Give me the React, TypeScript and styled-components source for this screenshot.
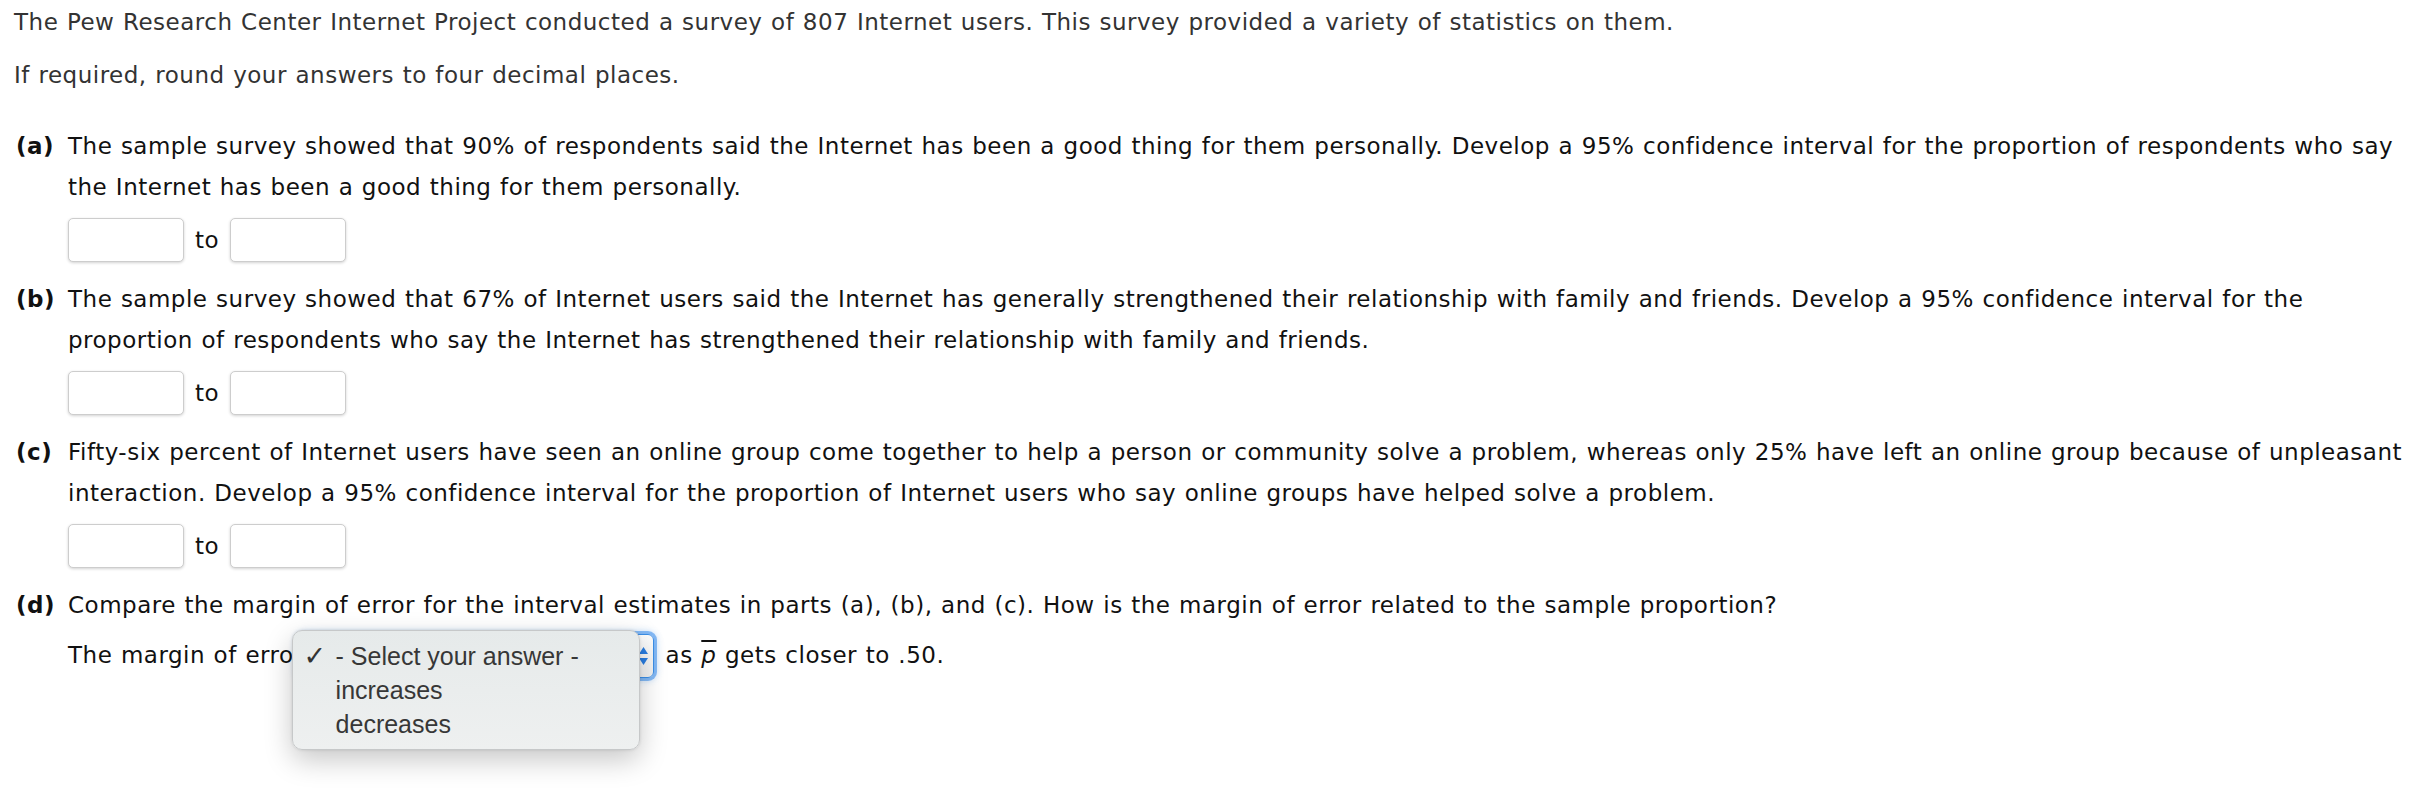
import React from 'react'
import styled, { createGlobalStyle } from 'styled-components'

const GlobalStyle = createGlobalStyle`
  html, body {
    margin: 0;
    padding: 0;
    background: #fff;
  }
  body {
    font-family: 'DejaVu Sans', Verdana, sans-serif;
  }
`

type Part = {
  label: string
  lines: string[]
}

const parts: Part[] = [
  {
    label: '(a)',
    lines: [
      'The sample survey showed that 90% of respondents said the Internet has been a good thing for them personally. Develop a 95% confidence interval for the proportion of respondents who say',
      'the Internet has been a good thing for them personally.'
    ]
  },
  {
    label: '(b)',
    lines: [
      'The sample survey showed that 67% of Internet users said the Internet has generally strengthened their relationship with family and friends. Develop a 95% confidence interval for the',
      'proportion of respondents who say the Internet has strengthened their relationship with family and friends.'
    ]
  },
  {
    label: '(c)',
    lines: [
      'Fifty-six percent of Internet users have seen an online group come together to help a person or community solve a problem, whereas only 25% have left an online group because of unpleasant',
      'interaction. Develop a 95% confidence interval for the proportion of Internet users who say online groups have helped solve a problem.'
    ]
  }
]

const options = ['- Select your answer -', 'increases', 'decreases']

const App = () => {
  return (
    <>
      <GlobalStyle />
      <Page>
        <Intro $gap={12}>
          The Pew Research Center Internet Project conducted a survey of 807 Internet users. This survey provided a
          variety of statistics on them.
        </Intro>
        <Intro $gap={30}>If required, round your answers to four decimal places.</Intro>

        {parts.map((part) => (
          <PartBlock key={part.label}>
            <Label>{part.label}</Label>
            <Body>
              <Question>
                {part.lines.map((line, i) => (
                  <React.Fragment key={i}>
                    {line}
                    {i < part.lines.length - 1 && <br />}
                  </React.Fragment>
                ))}
              </Question>
              <AnswerRow>
                <AnswerInput type="text" />
                <span>to</span>
                <AnswerInput type="text" />
              </AnswerRow>
            </Body>
          </PartBlock>
        ))}

        <PartBlock>
          <Label>(d)</Label>
          <Body>
            <Question>
              Compare the margin of error for the interval estimates in parts (a), (b), and (c). How is the margin of
              error related to the sample proportion?
            </Question>
            <SentenceRow>
              <span>The margin of error</span>
              <SelectWrap>
                <SelectBox>
                  <Stepper width="11" height="22" viewBox="0 0 11 22">
                    <path d="M5.5 2 L10 9 L1 9 Z" fill="#2a7de1" />
                    <path d="M5.5 20 L10 13 L1 13 Z" fill="#2a7de1" />
                  </Stepper>
                </SelectBox>
                <Menu>
                  {options.map((opt, i) => (
                    <MenuItem key={opt}>
                      <Check>{i === 0 ? '✓' : ''}</Check>
                      <span>{opt}</span>
                    </MenuItem>
                  ))}
                </Menu>
              </SelectWrap>
              <span>
                as <PBar>p</PBar> gets closer to .50.
              </span>
            </SentenceRow>
          </Body>
        </PartBlock>
      </Page>
    </>
  )
}

const Page = styled.div`
  min-height: 794px;
  box-sizing: border-box;
  padding: 2px 8px 0 14px;
  font-size: 23px;
  line-height: 41px;
  letter-spacing: 0.5px;
  word-spacing: 0.8px;
  color: #111;
`

const Intro = styled.p<{ $gap: number }>`
  margin: 0 0 ${(p) => p.$gap}px;
  color: #333;
`

const PartBlock = styled.div`
  display: grid;
  grid-template-columns: 52px 1fr;
  margin: 0 0 17px 2px;
`

const Label = styled.span`
  font-weight: bold;
  color: #111;
`

const Body = styled.div`
  display: flex;
  flex-direction: column;
  min-width: 0;
`

const Question = styled.div`
  white-space: nowrap;
`

const AnswerRow = styled.div`
  display: flex;
  align-items: center;
  gap: 11px;
  margin-top: 10px;
  line-height: 44px;
`

const AnswerInput = styled.input`
  box-sizing: border-box;
  width: 116px;
  height: 44px;
  margin: 0;
  border: 1px solid #cdcdcd;
  border-radius: 5px;
  background: #fff;
  box-shadow: 0 1px 3px rgba(0, 0, 0, 0.18);
  font: inherit;
`

const SentenceRow = styled.div`
  display: flex;
  align-items: center;
  gap: 12px;
  margin-top: 9px;
  height: 41px;
  white-space: nowrap;
`

const SelectWrap = styled.div`
  position: relative;
  width: 356px;
  height: 44px;
  margin-left: -18px;
`

const SelectBox = styled.div`
  box-sizing: border-box;
  width: 100%;
  height: 100%;
  display: flex;
  align-items: center;
  justify-content: flex-end;
  padding-right: 4px;
  border: 1px solid #3b8fe8;
  border-radius: 6px;
  background: linear-gradient(#fdfdfd, #f1f1f1);
  box-shadow: 0 0 0 3px rgba(70, 150, 240, 0.6), 0 0 6px 3px rgba(70, 150, 240, 0.3);
`

const Stepper = styled.svg`
  display: block;
`

const Menu = styled.ul`
  position: absolute;
  left: -6px;
  top: -4px;
  box-sizing: border-box;
  width: 348px;
  margin: 0;
  padding: 8px 0;
  list-style: none;
  border: 1px solid #c6c8c9;
  border-radius: 10px;
  background: linear-gradient(#e6eaea, #eef0f0);
  box-shadow: 0 10px 28px rgba(0, 0, 0, 0.22), 0 0 3px rgba(0, 0, 0, 0.12);
  font-family: 'Liberation Sans', Arial, sans-serif;
  font-size: 25px;
  letter-spacing: 0;
  word-spacing: 0;
  color: #373737;
`

const MenuItem = styled.li`
  display: grid;
  grid-template-columns: 43px 1fr;
  align-items: center;
  height: 34px;
  line-height: 34px;
`

const Check = styled.span`
  padding-left: 11px;
  font-family: 'DejaVu Sans', sans-serif;
  font-size: 27px;
  color: #333;
`

const PBar = styled.span`
  font-style: italic;
  text-decoration: overline;
  text-decoration-thickness: 2px;
`

export default App
